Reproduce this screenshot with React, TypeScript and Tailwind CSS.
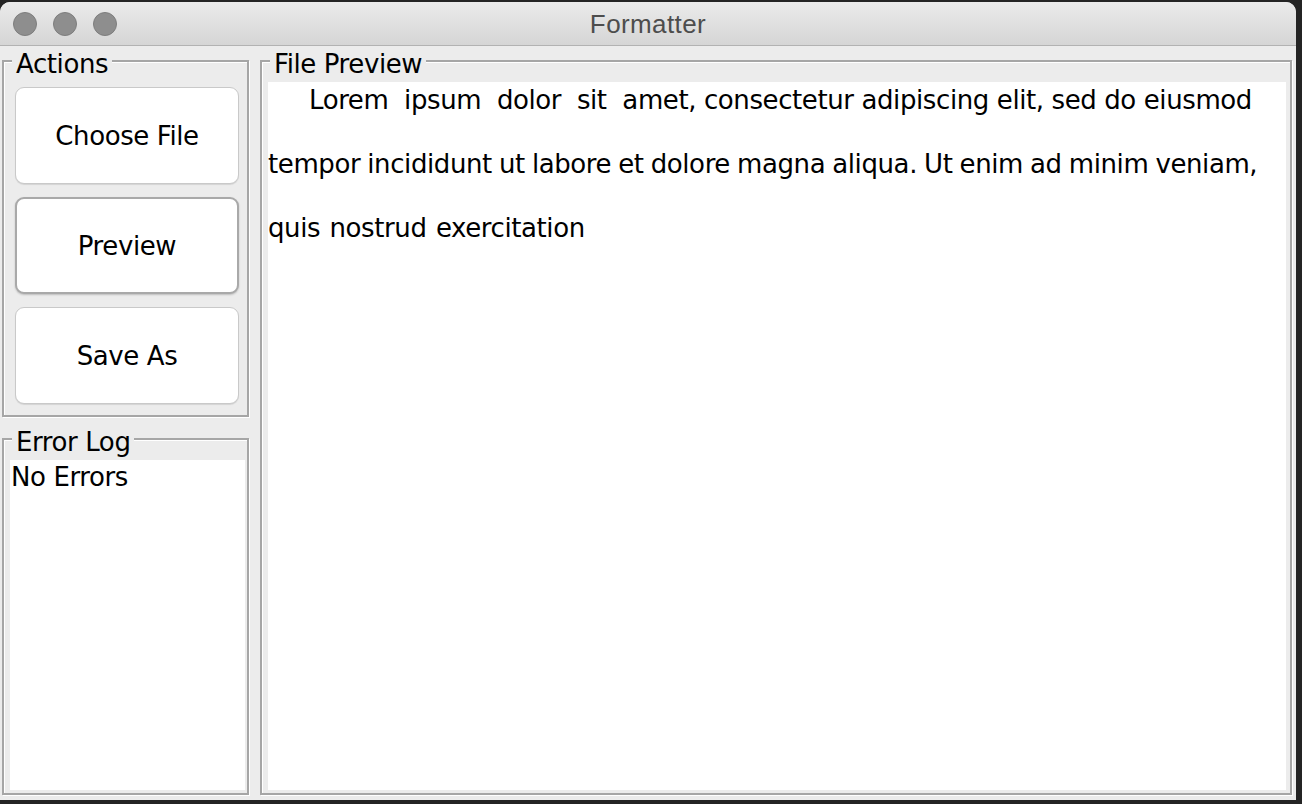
import React from "react";

const FONT = { fontFamily: '"DejaVu Sans", "Liberation Sans", sans-serif' };

function Group({
  title,
  className,
  children,
}: {
  title: string;
  className: string;
  children?: React.ReactNode;
}) {
  return (
    <div
      className={`relative border-2 border-[#a6a6a6] shadow-[1px_1px_0_#ffffff,inset_1px_1px_0_#ffffff] ${className}`}
    >
      <span className="absolute left-[8px] top-[-13px] bg-[#ececec] px-[4px] text-[26px] leading-[30px] tracking-[-0.4px] text-black whitespace-nowrap">
        {title}
      </span>
      {children}
    </div>
  );
}

function Btn({ label, focused }: { label: string; focused?: boolean }) {
  return (
    <div
      className={`flex h-[97px] items-center justify-center rounded-[9px] bg-white text-[26px] leading-[30px] tracking-[-0.4px] text-black ${
        focused
          ? "border-2 border-[#a9a9a9] shadow-[0_1px_2px_rgba(0,0,0,0.2)]"
          : "border border-[#c9c9c9] shadow-[0_1px_1px_rgba(0,0,0,0.1)]"
      }`}
    >
      {label}
    </div>
  );
}

export default function App() {
  return (
    <div
      className="flex h-[804px] w-[1302px] flex-col bg-[#242424] pt-[2px] pr-[6px] pb-[4px]"
      style={FONT}
    >
      <div className="flex h-[798px] w-[1296px] flex-col overflow-hidden rounded-t-[10px] bg-[#ececec]">
        {/* Title bar */}
        <div className="relative flex h-[44px] shrink-0 items-center justify-center border-b border-[#b2b2b2] bg-gradient-to-b from-[#ebebeb] to-[#d5d5d5]">
          <div className="absolute left-[13px] top-[10px] flex gap-[16px]">
            <div className="h-[24px] w-[24px] rounded-full border border-[#7d7d7d] bg-[#8e8e8e]" />
            <div className="h-[24px] w-[24px] rounded-full border border-[#7d7d7d] bg-[#8e8e8e]" />
            <div className="h-[24px] w-[24px] rounded-full border border-[#7d7d7d] bg-[#8e8e8e]" />
          </div>
          <span
            className="text-[26px] leading-[30px] tracking-[0.4px] text-[#4d4d4d]"
            style={{ fontFamily: '"Liberation Sans", Arial, sans-serif' }}
          >
            Formatter
          </span>
        </div>

        {/* Content */}
        <div className="flex min-h-0 flex-1 gap-[11px] pl-[2px] pr-[4px] pt-[14px] pb-[5px]">
          {/* Left column */}
          <div className="flex w-[247px] shrink-0 flex-col gap-[21px]">
            <Group title="Actions" className="h-[357px] shrink-0 pl-[11px] pr-[8px] pt-[25px]">
              <div className="flex flex-col gap-[13px]">
                <Btn label="Choose File" />
                <Btn label="Preview" focused />
                <Btn label="Save As" />
              </div>
            </Group>
            <Group title="Error Log" className="flex flex-1 flex-col pl-[6px] pr-[2px] pt-[20px] pb-[3px]">
              <div className="flex-1 bg-white pl-[1px] pt-[2px] text-[26px] leading-[30px] tracking-[-0.4px] text-black">
                No Errors
              </div>
            </Group>
          </div>

          {/* File preview */}
          <Group title="File Preview" className="flex flex-1 flex-col pl-[6px] pr-[4px] pt-[20px] pb-[3px]">
            <div className="flex flex-1 flex-col gap-[34px] bg-white pt-[3px] text-[26px] leading-[30px] tracking-[-0.4px] text-black">
              <div className="whitespace-pre pl-[41px]">
                {"Lorem  ipsum  dolor  sit  amet, consectetur adipiscing elit, sed do eiusmod"}
              </div>
              <div className="whitespace-pre [word-spacing:-0.8px]">
                {"tempor incididunt ut labore et dolore magna aliqua. Ut enim ad minim veniam,"}
              </div>
              <div className="whitespace-pre [word-spacing:1.5px]">{"quis nostrud exercitation"}</div>
            </div>
          </Group>
        </div>
      </div>
    </div>
  );
}
